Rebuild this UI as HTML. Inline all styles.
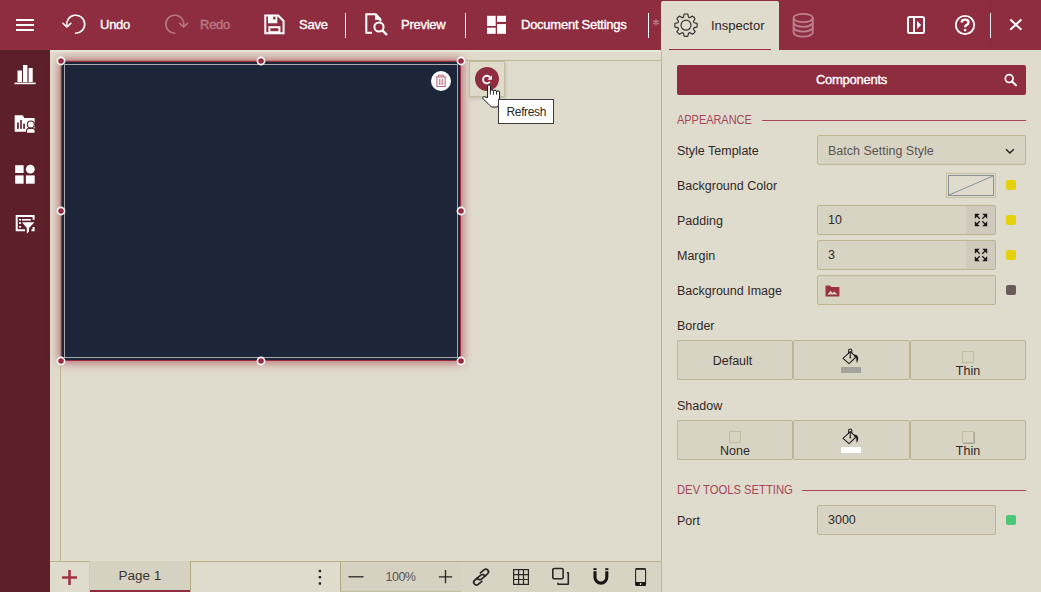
<!DOCTYPE html>
<html><head><meta charset="utf-8">
<style>
*{box-sizing:border-box;margin:0;padding:0}
html,body{width:1041px;height:592px;overflow:hidden}
body{position:relative;background:#e0dccd;font-family:"Liberation Sans",sans-serif;color:#3b3434}
.a{position:absolute}
#top{left:0;top:0;width:1041px;height:50px;background:#8f2d40}
#side{left:0;top:50px;width:50px;height:542px;background:#5d1f29}
.tb{color:#fff;font-size:13px;-webkit-text-stroke:0.35px #fff;letter-spacing:-0.25px;top:17px;line-height:16px;white-space:nowrap}
.sep{width:1px;background:#fff;top:13px;height:25px}
svg{display:block;overflow:visible}
.sec{font-size:12.5px;line-height:16px;color:#a4465a;white-space:nowrap;transform:scaleX(0.875);transform-origin:0 0}
.lbl{font-size:12.5px;line-height:16px;color:#302828;white-space:nowrap}
.val{font-size:12.5px;line-height:16px;color:#302828;white-space:nowrap}
.inp{background:#d8d4c4;border:1px solid #bcb590;border-radius:2px}
.btn{background:#d8d4c4;border:1px solid #bcb590;border-radius:2px}
.dot{width:10px;height:10px;border-radius:2px}

</style></head><body>
<!-- TOP BAR -->
<div id="top" class="a"></div>
<div id="side" class="a"></div>

<!-- top bar icons -->
<svg class="a" style="left:0;top:0" width="1041" height="50" viewBox="0 0 1041 50">
 <g fill="#fff">
  <rect x="16" y="19" width="18" height="2"/><rect x="16" y="24" width="18" height="2"/><rect x="16" y="29" width="18" height="2"/>
 </g>
 <g fill="none" stroke="#fff" stroke-width="1.6" stroke-linecap="round" stroke-linejoin="round">
  <path d="M75.6,33.2 A9,9 0 1,0 66.9,26.2"/>
  <path d="M63,23.3 L66.9,27 L70.8,23.3"/>
 </g>
 <g fill="none" stroke="#fff" opacity="0.35" stroke-width="1.6" stroke-linecap="round" stroke-linejoin="round">
  <path d="M174.9,33.2 A9,9 0 1,1 183.6,26.2"/>
  <path d="M187.5,23.3 L183.6,27 L179.7,23.3"/>
 </g>
 <!-- save -->
 <g fill="none" stroke="#fff" stroke-width="2">
  <path d="M265.3,15.6 H278.2 L283.6,21 V33.3 H265.3 Z"/>
  <rect x="269.4" y="27.2" width="10" height="5"/>
 </g>
 <path fill="#fff" d="M268,15.6 H277.3 V23.2 H268 Z M273.2,16.3 V19.6 H275.5 V16.3 Z" fill-rule="evenodd"/>
 <!-- preview -->
 <g fill="none" stroke="#fff" stroke-width="2">
  <path d="M372,32.8 H366.3 V14.3 H375.8 L380.4,19.2 V21.5"/>
  <circle cx="379" cy="27" r="4.6"/>
 </g>
 <path d="M375.8,14.3 V19.2 H380.4" fill="#fff" stroke="#fff" stroke-width="1.5"/>
 <path d="M382.6,30.6 L386.4,34.4" stroke="#fff" stroke-width="2.2" stroke-linecap="round"/>
 <!-- doc settings -->
 <g fill="#fff">
  <rect x="487" y="15.8" width="8.7" height="10.2"/>
  <rect x="497" y="15.8" width="9" height="6.1"/>
  <rect x="487" y="27.7" width="8.7" height="6.1"/>
  <rect x="497" y="24.1" width="9" height="9.7"/>
 </g>
 <!-- separators -->
 <g fill="#fff">
  <rect x="345" y="13" width="1" height="25"/>
  <rect x="465" y="13" width="1" height="25"/>
  <rect x="648" y="13" width="1" height="25"/>
  <rect x="990" y="13" width="1" height="25"/>
 </g>
 <rect x="990" y="0" width="1" height="50" fill="#000" fill-opacity="0.06"/>
 <g stroke="#fff" stroke-opacity="0.4" stroke-width="1.3"><path d="M656,19 V25.6 M652.9,20.7 L659.1,24 M659.1,20.7 L652.9,24"/></g>
 <!-- database -->
 <g fill="none" stroke="#fff" opacity="0.4" stroke-width="1.8">
  <ellipse cx="803.2" cy="18" rx="9.6" ry="4.2"/>
  <path d="M793.6,18 V32.5 A9.6,4.2 0 0,0 812.8,32.5 V18"/>
  <path d="M793.6,22.6 A9.6,4.2 0 0,0 812.8,22.6"/>
  <path d="M793.6,27.4 A9.6,4.2 0 0,0 812.8,27.4"/>
  <circle cx="809.6" cy="24.6" r="0.6" fill="#fff" stroke="none"/><circle cx="809.6" cy="29.4" r="0.6" fill="#fff" stroke="none"/><circle cx="809.6" cy="34" r="0.6" fill="#fff" stroke="none"/>
 </g>
 <!-- panel toggle -->
 <g fill="none" stroke="#fff" stroke-width="2">
  <rect x="908" y="17" width="16" height="16" rx="1.5"/>
  <path d="M914,17 V33"/>
 </g>
 <path d="M917,20.9 L921.2,25 L917,29 Z" fill="#fff"/>
 <!-- help -->
 <circle cx="965" cy="25" r="9.2" fill="none" stroke="#fff" stroke-width="1.8"/>
 <path d="M961.7,22.6 C961.7,20.4 963.1,19.6 965.1,19.6 C967.2,19.6 968.5,20.8 968.5,22.4 C968.5,24.2 966.9,24.7 965.9,25.5 C965.3,26 965.1,26.5 965.1,27.3" fill="none" stroke="#fff" stroke-width="2.3"/>
 <circle cx="965.1" cy="30.1" r="1.35" fill="#fff"/>
 <!-- close -->
 <path d="M1010.3,19.5 L1021.4,29.7 M1021.4,19.5 L1010.3,29.7" stroke="#fff" stroke-width="2"/>
</svg>
<div class="a tb" style="left:100px">Undo</div>
<div class="a tb" style="left:200px;opacity:.35">Redo</div>
<div class="a tb" style="left:299px">Save</div>
<div class="a tb" style="left:401px">Preview</div>
<div class="a tb" style="left:521px">Document Settings</div>
<!-- inspector tab -->
<div class="a" style="left:661px;top:1px;width:118px;height:49px;background:#e0dccd;border-radius:2px 2px 0 0"></div>
<div class="a" style="left:669px;top:49px;width:102px;height:1px;background:#9a2b40"></div>
<div class="a" style="left:711px;top:18px;font-size:13px;line-height:16px;color:#2e2626">Inspector</div>
<svg class="a" style="left:0;top:0" width="1041" height="50">
 <path fill="none" stroke="#3b3434" stroke-width="1.2" stroke-linejoin="round" d="M683.52,17.18 L684.11,14.16 A11.2,11.2 0 0,1 687.89,14.16 L688.48,17.18 A8.4,8.4 0 0,1 689.92,17.77 L689.92,17.77 L692.47,16.05 A11.2,11.2 0 0,1 695.15,18.73 L693.43,21.28 A8.4,8.4 0 0,1 694.02,22.72 L694.02,22.72 L697.04,23.31 A11.2,11.2 0 0,1 697.04,27.09 L694.02,27.68 A8.4,8.4 0 0,1 693.43,29.12 L693.43,29.12 L695.15,31.67 A11.2,11.2 0 0,1 692.47,34.35 L689.92,32.63 A8.4,8.4 0 0,1 688.48,33.22 L688.48,33.22 L687.89,36.24 A11.2,11.2 0 0,1 684.11,36.24 L683.52,33.22 A8.4,8.4 0 0,1 682.08,32.63 L682.08,32.63 L679.53,34.35 A11.2,11.2 0 0,1 676.85,31.67 L678.57,29.12 A8.4,8.4 0 0,1 677.98,27.68 L677.98,27.68 L674.96,27.09 A11.2,11.2 0 0,1 674.96,23.31 L677.98,22.72 A8.4,8.4 0 0,1 678.57,21.28 L678.57,21.28 L676.85,18.73 A11.2,11.2 0 0,1 679.53,16.05 L682.08,17.77 A8.4,8.4 0 0,1 683.52,17.18 Z"/>
 <circle cx="686" cy="25.2" r="5" fill="none" stroke="#3b3434" stroke-width="1.2"/>
</svg>



<!-- sidebar icons -->
<svg class="a" style="left:0;top:0" width="50" height="592">
 <g fill="#fff">
  <rect x="17.5" y="70.5" width="4.5" height="11.5"/>
  <rect x="23" y="65" width="4.4" height="17"/>
  <rect x="28.6" y="68" width="4.1" height="14"/>
  <rect x="14.5" y="82.6" width="21.2" height="1.6"/>
 </g>
 <!-- folder -->
 <path fill="#fff" d="M14.7,115.2 H22.8 L24.3,118 H34.6 V131.8 H14.7 Z"/>
 <g fill="#5d1f29">
  <rect x="17.1" y="122.5" width="1.7" height="6.4"/>
  <rect x="20.2" y="119.9" width="1.6" height="9"/>
  <rect x="23.2" y="123.7" width="1.7" height="5.2"/>
  <circle cx="30.8" cy="124.4" r="4"/>
  <path d="M26,133.5 V130.5 C26,128.5 27.8,127.8 30.8,127.8 C33.8,127.8 35.6,128.5 35.6,130.5 V133.5 Z"/>
 </g>
 <g fill="#fff">
  <circle cx="30.8" cy="124.4" r="2.9"/>
  <path d="M27,132.7 V130.7 C27,129.3 28.6,128.9 30.8,128.9 C33,128.9 34.6,129.3 34.6,130.7 V132.7 Z"/>
 </g>
 <!-- grid w/ circle -->
 <g fill="#fff">
  <rect x="15.2" y="165.2" width="8.4" height="7.8"/>
  <circle cx="30.3" cy="169.2" r="4.4"/>
  <rect x="15.2" y="175.4" width="8.4" height="8.3"/>
  <rect x="25.9" y="175.4" width="8.8" height="8.3"/>
 </g>
 <!-- report filter -->
 <path fill="none" stroke="#fff" stroke-width="2" d="M25,230.3 H16.7 V216 H33.6 V219.8 M33.6,227 V230.3 H31.5"/>
 <g fill="#fff">
  <rect x="19" y="219" width="2.1" height="1.6"/>
  <rect x="22" y="219" width="8.8" height="1.6"/>
  <rect x="19" y="222.3" width="2.1" height="1.6"/>
  <rect x="19" y="226" width="2.1" height="1.6"/>
  <path d="M22,222.3 H34.4 L29,228 V231.5 L26.8,233.7 V228 Z"/>
 </g>
</svg>

<!-- canvas -->
<div class="a" style="left:50px;top:50px;width:611px;height:2px;background:#e9e7da"></div>
<div class="a" style="left:60px;top:60px;width:601px;height:1px;background:#bdb794"></div>
<div class="a" style="left:60px;top:60px;width:1px;height:501px;background:#bdb794"></div>


<!-- card -->
<div class="a" style="left:61px;top:61px;width:400px;height:300px;background:#1c2638;border:1px solid #9a2d42;box-shadow:0 0 9px 2px rgba(158,50,68,0.65)"></div>
<div class="a" style="left:64px;top:64px;width:394px;height:294px;border:1px solid #a9a9a9"></div>
<!-- trash -->
<div class="a" style="left:431px;top:71px;width:20px;height:20px;border-radius:50%;background:#fff"></div>
<svg class="a" style="left:0;top:0" width="600" height="400">
 <g fill="none" stroke="#bd6676" stroke-width="1.1">
  <path d="M435.5,77 H446.5"/>
  <path d="M438.7,76.7 V75.3 H443.3 V76.7"/>
  <path d="M436.9,77.5 V86.5 H445.1 V77.5"/>
  <path d="M439.8,79 V85 M442.2,79 V85"/>
 </g>
 <g fill="#952b40" stroke="#fff" stroke-width="1.6">
  <circle cx="61" cy="61" r="3.6"/><circle cx="261" cy="61" r="3.6"/><circle cx="461" cy="61" r="3.6"/>
  <circle cx="61" cy="211" r="3.6"/><circle cx="461" cy="211" r="3.6"/>
  <circle cx="61" cy="361" r="3.6"/><circle cx="261" cy="361" r="3.6"/><circle cx="461" cy="361" r="3.6"/>
 </g>
</svg>
<!-- action box -->
<div class="a" style="left:469px;top:61px;width:36px;height:36px;background:#dedbca;border:1px solid #c2bd9c;box-shadow:1px 2px 3px rgba(0,0,0,0.12)"></div>
<div class="a" style="left:475px;top:67px;width:24px;height:24px;border-radius:50%;background:#8f2d40"></div>
<svg class="a" style="left:0;top:0" width="600" height="400">
 <path d="M490,77.4 A3.8,3.8 0 1,0 489.9,81.8" fill="none" stroke="#fff" stroke-width="1.8"/>
 <path d="M491.9,75.2 V79.7 H487.5 Z" fill="#fff"/>
 <!-- hand cursor -->
 <path d="M487.6,97.6 V85.9 C487.6,84.5 490.4,84.5 490.4,85.9 V91 C490.4,89.5 493.5,89.5 493.5,91 V91.3 C493.5,89.8 496.5,89.8 496.5,91.3 V92 C496.5,90.5 499.6,90.5 499.6,92 V101.5 C499.6,103.5 498.5,105.5 497.3,107 H491.5 C489.5,105 486.8,102 483.3,99.2 C482,98.2 482.8,96 484.6,96.8 Z" fill="#fff" stroke="#151515" stroke-width="1" stroke-linejoin="round"/>
 <path d="M490.4,91 V94.6 M493.5,91.3 V94.6 M496.5,92 V94.6" stroke="#151515" stroke-width="0.9"/>
</svg>
<!-- tooltip -->
<div class="a" style="left:498px;top:99px;width:56px;height:25px;background:#fff;border:1px solid #3c3c3c;font-size:12px;line-height:24px;padding-left:7.5px;color:#2a2a2a;letter-spacing:-0.35px">Refresh</div>

<!-- right panel -->
<div class="a" style="left:661px;top:50px;width:1px;height:542px;background:#bdb794"></div>


<!-- components button -->
<div class="a" style="left:677px;top:65px;width:349px;height:30px;background:#8f2d40;border-radius:2px"></div>
<div class="a tb" style="left:677px;top:72px;width:349px;text-align:center">Components</div>
<svg class="a" style="left:0;top:0" width="1041" height="592">
 <circle cx="1009.2" cy="78.6" r="3.9" fill="none" stroke="#fff" stroke-width="1.7"/>
 <path d="M1012,81.5 L1016,85.3" stroke="#fff" stroke-width="2" stroke-linecap="round"/>
</svg>
<div class="a sec" style="left:677px;top:112px">APPEARANCE</div>
<div class="a" style="left:762px;top:120px;width:264px;height:1px;background:#a8475a"></div>
<div class="a lbl" style="left:677px;top:143px">Style Template</div>
<div class="a inp" style="left:817px;top:135px;width:209px;height:30px"></div>
<div class="a val" style="left:828px;top:143px;color:#5a5353">Batch Setting Style</div>
<svg class="a" style="left:0;top:0" width="1041" height="592">
 <path d="M1006,149.2 L1009.9,153 L1013.8,149.2" fill="none" stroke="#2b2424" stroke-width="1.5"/>
</svg>
<div class="a lbl" style="left:677px;top:178px">Background Color</div>
<div class="a" style="left:946px;top:173px;width:50px;height:25px;border:1px solid #c7c0a0;background:#e0dccd"></div>
<div class="a" style="left:948px;top:175px;width:46px;height:21px;border:1px solid #8a8f96"></div>
<svg class="a" style="left:0;top:0" width="1041" height="592">
 <path d="M949,195 L993,176" stroke="#8a929c" stroke-width="1"/>
</svg>
<div class="a dot" style="left:1006px;top:180px;background:#e5d10b"></div>

<div class="a lbl" style="left:677px;top:213px">Padding</div>
<div class="a inp" style="left:817px;top:205px;width:179px;height:30px"></div>
<div class="a" style="left:966px;top:206px;width:29px;height:28px;background:#cfcabb;border-radius:0 2px 2px 0"></div>
<div class="a val" style="left:828px;top:212px">10</div>
<div class="a dot" style="left:1006px;top:215px;background:#e5d10b"></div>

<div class="a lbl" style="left:677px;top:248px">Margin</div>
<div class="a inp" style="left:817px;top:240px;width:179px;height:30px"></div>
<div class="a" style="left:966px;top:241px;width:29px;height:28px;background:#cfcabb;border-radius:0 2px 2px 0"></div>
<div class="a val" style="left:828px;top:247px">3</div>
<div class="a dot" style="left:1006px;top:250px;background:#e5d10b"></div>

<div class="a lbl" style="left:677px;top:283px">Background Image</div>
<div class="a inp" style="left:817px;top:275px;width:179px;height:30px"></div>
<div class="a dot" style="left:1006px;top:285px;background:#6b5c5a"></div>
<svg class="a" style="left:0;top:0" width="1041" height="592">
 <g id="expand1" fill="#1e1616">
  <path d="M974.8,213.8 H979.8 L974.8,218.8 Z M987.2,213.8 H982.2 L987.2,218.8 Z M974.8,226.2 H979.8 L974.8,221.2 Z M987.2,226.2 H982.2 L987.2,221.2 Z"/>
  <path d="M976.5,215.5 L979.7,218.7 M985.5,215.5 L982.3,218.7 M976.5,224.5 L979.7,221.3 M985.5,224.5 L982.3,221.3" stroke="#1e1616" stroke-width="1.3"/>
 </g>
 <use href="#expand1" y="35"/>
 <path d="M825.5,285.5 H830 L831.3,287 H839.4 V296.4 H825.5 Z" fill="#9a3145"/>
 <path d="M827.5,294.5 L830.5,290.8 L832.6,293 L834.2,291.5 L837.5,294.5 Z" fill="#d7d3c3"/>
</svg>

<div class="a lbl" style="left:677px;top:318px">Border</div>
<div class="a btn" style="left:677px;top:340px;width:116px;height:40px"></div>
<div class="a btn" style="left:793px;top:340px;width:117px;height:40px"></div>
<div class="a btn" style="left:910px;top:340px;width:116px;height:40px"></div>
<div class="a val" style="left:674.5px;top:353px;width:116px;text-align:center">Default</div>
<div class="a" style="left:841px;top:367px;width:20px;height:6px;background:#a6a29c"></div>
<div class="a" style="left:962px;top:351px;width:12px;height:12px;border:1px solid #c2bc9c"></div>
<div class="a val" style="left:910px;top:363px;width:116px;text-align:center">Thin</div>

<div class="a lbl" style="left:677px;top:398px">Shadow</div>
<div class="a btn" style="left:677px;top:420px;width:116px;height:40px"></div>
<div class="a btn" style="left:793px;top:420px;width:117px;height:40px"></div>
<div class="a btn" style="left:910px;top:420px;width:116px;height:40px"></div>
<div class="a" style="left:729px;top:431px;width:12px;height:12px;border:1px solid #c2bc9c"></div>
<div class="a val" style="left:677px;top:443px;width:116px;text-align:center">None</div>
<div class="a" style="left:841px;top:447px;width:20px;height:6px;background:#fff"></div>
<div class="a" style="left:962px;top:431px;width:12px;height:12px;border:1px solid #c2bc9c;box-shadow:1px 1px 0 #a8a396"></div>
<div class="a val" style="left:910px;top:443px;width:116px;text-align:center">Thin</div>
<svg class="a" style="left:0;top:0" width="1041" height="592">
 <g id="bucket" fill="none" stroke="#241c1c" stroke-width="1.05" stroke-linejoin="round">
  <path d="M843,358.3 L850.3,351.6 L856,357 L849,363.7 Z"/>
  <path d="M848.6,354 V350.6 A1.6,1.6 0 0,1 851.8,350.6 V353"/>
  <path d="M850.3,351.8 V357.2"/>
  <circle cx="850.3" cy="357.5" r="0.9" fill="#241c1c" stroke="none"/>
  <path d="M853.8,354.6 C857,354.2 859,357.2 858,360 L856.8,363.2 L856.3,360 C856.6,358.2 855.8,356.8 854.3,356.5 Z" fill="#241c1c" stroke="none"/>
 </g>
 <use href="#bucket" y="80"/>
</svg>

<div class="a sec" style="left:677px;top:482px;transform:scaleX(0.9)">DEV TOOLS SETTING</div>
<div class="a" style="left:802px;top:490px;width:224px;height:1px;background:#a8475a"></div>
<div class="a lbl" style="left:677px;top:513px">Port</div>
<div class="a inp" style="left:817px;top:505px;width:179px;height:30px"></div>
<div class="a val" style="left:828px;top:512px">3000</div>
<div class="a dot" style="left:1006px;top:515px;background:#4fc77a"></div>

<!-- bottom bar -->
<div class="a" style="left:50px;top:561px;width:611px;height:31px;background:#e0dccd;border-top:1px solid #b8b18a"></div>
<div class="a" style="left:89px;top:561px;width:1px;height:31px;background:#d0cbb3"></div>
<div class="a" style="left:90px;top:561px;width:101px;height:31px;background:#d6d2c1;border-right:1px solid #b0a982"></div>
<div class="a" style="left:90px;top:590px;width:100px;height:2px;background:#8f2d40"></div>
<div class="a" style="left:90px;top:567px;width:100px;text-align:center;font-size:13.5px;line-height:18px;color:#3b3434">Page 1</div>
<div class="a" style="left:340px;top:561px;width:121px;height:31px;background:#d6d2c1;border-top:1px solid #b8b18a;border-left:1.5px solid #b0a982;border-bottom:1px solid #c4be9e"></div>
<div class="a" style="left:461px;top:562px;width:200px;height:30px;background:#d8d4c4"></div>
<div class="a" style="left:340px;top:569px;width:120px;text-align:center;font-size:12.5px;line-height:16px;color:#5b5454;letter-spacing:-0.5px;padding-left:1px">100%</div>
<svg class="a" style="left:0;top:0" width="1041" height="592">
 <path d="M62,577.5 H77 M69.5,570 V585" stroke="#a23446" stroke-width="2.6"/>
 <g fill="#2b2424"><rect x="318.7" y="569.8" width="2.4" height="2.4"/><rect x="318.7" y="576" width="2.4" height="2.4"/><rect x="318.7" y="582.3" width="2.4" height="2.4"/></g>
 <path d="M348.5,576.8 H363.5" stroke="#2b2424" stroke-width="1.3"/>
 <path d="M438.8,576.8 H452.2 M445.5,570 V583.3" stroke="#2b2424" stroke-width="1.3"/>
 <!-- link -->
 <g fill="none" stroke="#2b2424" stroke-width="1.7" stroke-linecap="round" transform="rotate(-40 481.1 577.1)">
  <path d="M483.30,573.40 L488.00,573.40 A2.7,2.7 0 0,1 488.00,578.80 L480.10,578.80 A2.7,2.7 0 0,1 477.56,575.18"/><path d="M478.90,580.80 L474.20,580.80 A2.7,2.7 0 0,1 474.20,575.40 L482.10,575.40 A2.7,2.7 0 0,1 484.64,579.02"/>
 </g>
 <!-- grid -->
 <g fill="none" stroke="#2b2424" stroke-width="1.2">
  <rect x="513.6" y="569.6" width="14.8" height="14.8"/>
  <path d="M518.6,569.6 V584.4 M523.5,569.6 V584.4 M513.6,574.6 H528.4 M513.6,579.5 H528.4"/>
 </g>
 <!-- copy -->
 <g fill="none" stroke="#2b2424" stroke-width="1.6" stroke-linejoin="round">
  <rect x="552.8" y="568.5" width="10.3" height="10.3" rx="1.3"/>
  <path d="M566.8,572.8 H568.3 V584.3 H558 V582.8"/>
 </g>
 <!-- magnet -->
 <path d="M595,571.2 V577.2 A5.9,5.9 0 0,0 606.8,577.2 V571.2" fill="none" stroke="#1e1616" stroke-width="3.1"/>
 <g fill="#1e1616"><rect x="593.4" y="568.2" width="3.2" height="1.9"/><rect x="605.2" y="568.2" width="3.2" height="1.9"/></g>
 <!-- phone -->
 <rect x="635.6" y="568.6" width="10" height="16.8" rx="1.6" fill="none" stroke="#2b2424" stroke-width="1.1"/>
 <rect x="635.3" y="582" width="10.6" height="4" rx="1" fill="#1e1616"/>
 <rect x="635.3" y="568.2" width="10.6" height="1.6" rx="0.8" fill="#2b2424"/>
 <circle cx="640.6" cy="584" r="0.9" fill="#e0dccd"/>
</svg>


</body></html>
